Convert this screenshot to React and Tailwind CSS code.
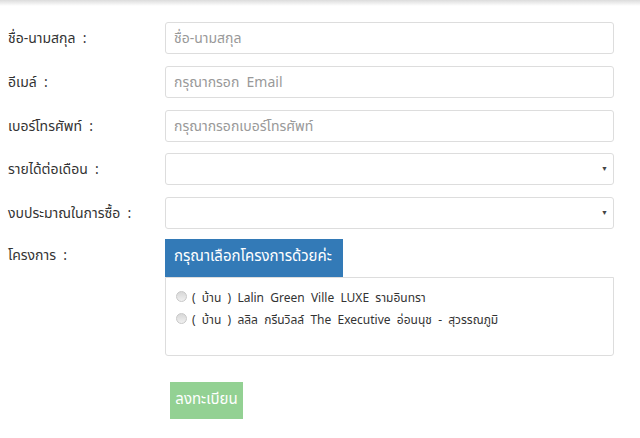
import { useState } from "react";

const font = { fontFamily: 'Tahoma, "Noto Sans Thai", "Noto Sans", "Liberation Sans", sans-serif' };

const projects = [
  "(  บ้าน  )  Lalin  Green  Ville  LUXE  รามอินทรา",
  "(  บ้าน  )  ลลิล  กรีนวิลล์  The  Executive  อ่อนนุช  -  สุวรรณภูมิ",
];

function Row({ label, children, top = "mt-[12px]" }) {
  return (
    <div className={`flex ${top}`}>
      <label className="w-[157px] shrink-0 whitespace-pre pt-[6px] text-[14px] text-[#333]">{label}</label>
      <div className="w-[449px]">{children}</div>
    </div>
  );
}

function Select() {
  return (
    <div className="relative h-[32px] rounded-[3px] border border-[#ddd] bg-white">
      <span className="absolute right-[5px] top-[12px] text-[7px] leading-none text-[#444]">▼</span>
    </div>
  );
}

const inputCls =
  "h-[32px] w-full whitespace-pre rounded-[3px] border border-[#ddd] px-[8px] text-[14px] outline-none placeholder:text-[#999]";

export default function App() {
  const [picked, setPicked] = useState(null);

  return (
    <div className="min-h-[438px] bg-white" style={font}>
      <div className="h-[6px] bg-gradient-to-b from-[#dcdcdc] to-white" />
      <div className="pl-[8px] pt-[16px]">
        <Row label="ชื่อ-นามสกุล  :" top="">
          <input className={inputCls} placeholder="ชื่อ-นามสกุล" />
        </Row>
        <Row label="อีเมล์  :">
          <input className={inputCls} placeholder="กรุณากรอก  Email" />
        </Row>
        <Row label="เบอร์โทรศัพท์  :">
          <input className={inputCls} placeholder="กรุณากรอกเบอร์โทรศัพท์" />
        </Row>
        <Row label="รายได้ต่อเดือน  :" top="mt-[11px]">
          <Select />
        </Row>
        <Row label="งบประมาณในการซื้อ  :">
          <Select />
        </Row>
        <Row label="โครงการ  :" top="mt-[10px]">
          <div className="h-[38px] w-[178px] bg-[#337ab7] pl-[9px] pt-[7px] text-[15px] text-white">
            กรุณาเลือกโครงการด้วยค่ะ
          </div>
          <div className="h-[79px] rounded-b-[3px] border border-[#ddd] px-[10px] pt-[11px]">
            {projects.map((p, i) => (
              <label key={i} className="flex h-[22px] items-start gap-[5px] whitespace-pre text-[12px] text-[#333]">
                <span
                  onClick={() => setPicked(i)}
                  className={`mt-[2px] h-[11px] w-[11px] shrink-0 rounded-full border border-[#c8c8c8] ${
                    picked === i ? "bg-[#337ab7]" : "bg-gradient-to-b from-[#d8d8d8] to-[#f0f0f0]"
                  }`}
                />
                <span>{p}</span>
              </label>
            ))}
          </div>
        </Row>
        <div className="ml-[162px] mt-[26px]">
          <button disabled className="h-[37px] w-[73px] bg-[#93d193] text-[15px] text-white">
            ลงทะเบียน
          </button>
        </div>
      </div>
    </div>
  );
}
